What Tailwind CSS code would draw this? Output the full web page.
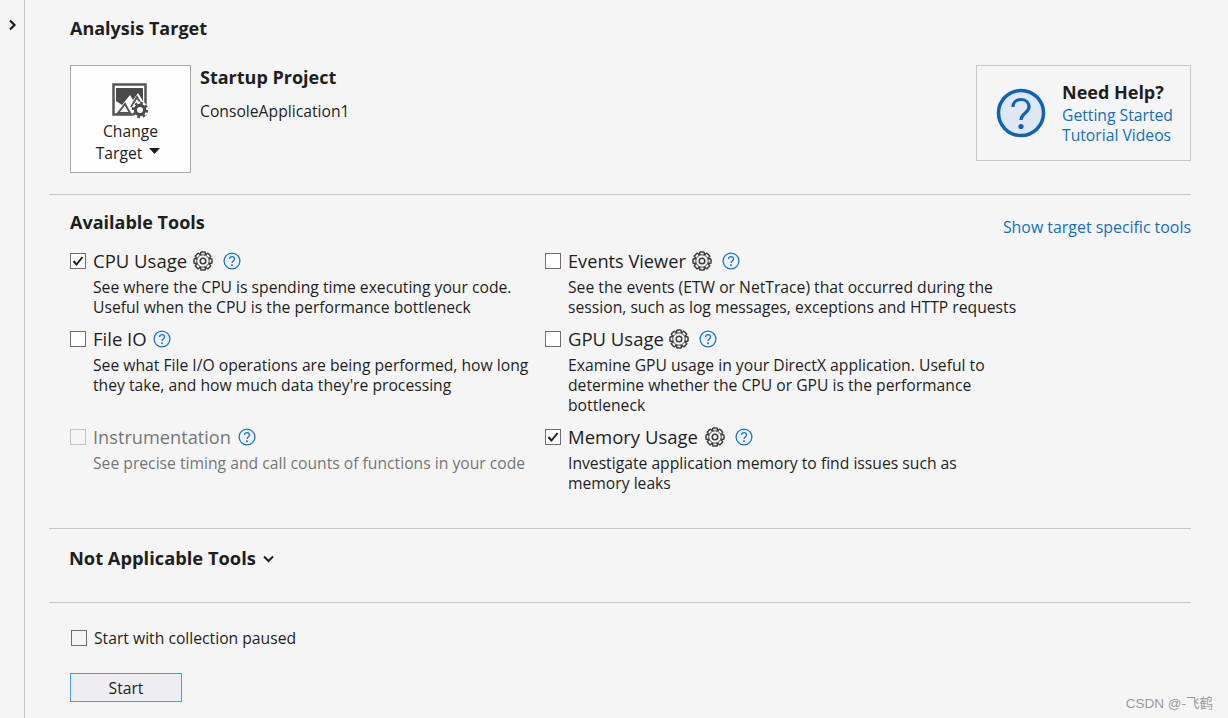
<!DOCTYPE html>
<html lang="en">
<head>
    <meta charset="UTF-8">
    <title>Analysis Target</title>
    <script src="https://cdn.jsdelivr.net/npm/@tailwindcss/browser@4"></script>
</head>
<body class="bg-[#f5f5f5] text-[#1e1e1e] font-['Open_Sans','Noto_Sans',sans-serif] text-[15.7px] leading-[20px] h-[718px] overflow-hidden">
<!-- shared icons -->
<svg width="0" height="0" class="absolute">
    <symbol id="cog" viewBox="0 0 20 20">
        <g fill="none" stroke="#3c3c3c" stroke-width="1.5">
            <rect x="7.7" y="1" width="4.6" height="18" rx="0.8"/>
            <rect x="7.7" y="1" width="4.6" height="18" rx="0.8" transform="rotate(45 10 10)"/>
            <rect x="7.7" y="1" width="4.6" height="18" rx="0.8" transform="rotate(90 10 10)"/>
            <rect x="7.7" y="1" width="4.6" height="18" rx="0.8" transform="rotate(135 10 10)"/>
        </g>
        <circle cx="10" cy="10" r="6.2" fill="#f5f5f5" stroke="#3c3c3c" stroke-width="0.9"/>
        <circle cx="10" cy="10" r="2.8" fill="none" stroke="#3c3c3c" stroke-width="1.5"/>
    </symbol>
    <symbol id="help" viewBox="0 0 18 18">
        <circle cx="9" cy="9" r="7.9" fill="#eef3fa" stroke="#1a73c7" stroke-width="1.3"/>
        <path d="M6.5 7 C6.5 3.8 11.5 3.8 11.5 7 C11.5 9 9 9 9 11" fill="none" stroke="#1a73c7" stroke-width="1.3"/>
        <circle cx="9" cy="13.3" r="1" fill="#1a73c7"/>
    </symbol>
    <symbol id="tick" viewBox="0 0 12 12">
        <path d="M1.5 6 L4.5 9.5 L10.5 2" fill="none" stroke="#1e1e1e" stroke-width="2"/>
    </symbol>
</svg>

<div class="flex h-[718px] relative">
    <!-- collapsed side rail -->
    <div class="w-[25px] shrink-0 border-r border-[#c4c4c4] pt-[19px] pl-[8px]">
        <svg width="9" height="12" viewBox="0 0 9 12"><path d="M2 1.5 L6.5 6 L2 10.5" fill="none" stroke="#1e1e1e" stroke-width="2.2"/></svg>
    </div>

    <div class="w-[1142px] ml-[24px]">
        <!-- analysis target -->
        <section class="h-[195px] border-b border-[#c8c8c8] pl-[21px] pt-[14px] flex flex-col">
            <h2 class="text-[18px] leading-[28px] font-bold">Analysis Target</h2>
            <div class="flex mt-[23px]">
                <div class="w-[121px] h-[108px] bg-[#fdfdfd] border border-[#a8a8a8] flex flex-col items-center pt-[17px]">
                    <svg width="38" height="36" viewBox="0 0 38 36">
                        <rect x="1.5" y="1.5" width="32" height="30" fill="#fff" stroke="#555" stroke-width="2.5"/>
                        <path d="M4 5 H31 V18 L26 10 L21 17 L18 12 L10 22 L4 18 Z" fill="#4a4a4a"/>
                        <path d="M6 30 L13 21 L18 30 Z M19 24 L25 14 L29 21" fill="none" stroke="#555" stroke-width="2"/>
                        <circle cx="28" cy="27" r="8.5" fill="#fdfdfd"/>
                        <circle cx="28" cy="27" r="4.6" fill="none" stroke="#4a4a4a" stroke-width="3.2"/>
                        <circle cx="28" cy="27" r="7" fill="none" stroke="#4a4a4a" stroke-width="2.4" stroke-dasharray="2.6 2.9"/>
                    </svg>
                    <span class="leading-[22px] mt-[1px]">Change</span>
                    <span class="leading-[22px] flex items-center">Target
                        <svg class="ml-[7px] mr-[5px] mb-[5px]" width="11" height="6" viewBox="0 0 11 6"><path d="M0 0 H11 L5.5 6 Z" fill="#1e1e1e"/></svg>
                    </span>
                </div>
                <div class="ml-[9px]">
                    <h3 class="text-[18px] leading-[26px] font-bold -mt-[1px]">Startup Project</h3>
                    <p class="mt-[11px]">ConsoleApplication1</p>
                </div>
                <div class="ml-auto w-[215px] h-[96px] border border-[#c8c8c8] flex items-center pl-[19px]">
                    <svg width="50" height="50" viewBox="0 0 50 50">
                        <circle cx="25" cy="25" r="22.5" fill="#dfe7f2" stroke="#0f62b5" stroke-width="3.5"/>
                        <path d="M17 19 C17 9 33 9 33 19 C33 25 25 25 25 32" fill="none" stroke="#0f62b5" stroke-width="3.2"/>
                        <circle cx="25" cy="38.5" r="2.6" fill="#0f62b5"/>
                    </svg>
                    <div class="ml-[16px] pt-[1px]">
                        <h3 class="text-[18px] leading-[20px] font-bold mb-[3px]">Need Help?</h3>
                        <a class="block text-[#0e70c0]">Getting Started</a>
                        <a class="block text-[#0e70c0]">Tutorial Videos</a>
                    </div>
                </div>
            </div>
        </section>

        <!-- available tools -->
        <section class="h-[334px] border-b border-[#c8c8c8] pl-[21px] pt-[13px]">
            <div class="flex justify-between items-end h-[28px]">
                <h2 class="text-[18px] leading-[28px] font-bold">Available Tools</h2>
                <a class="text-[#0e70c0] text-[15.9px] leading-[20px] -mb-[1px]">Show target specific tools</a>
            </div>
            <div class="grid grid-cols-[475px_475px] grid-rows-[78px_98px_auto] mt-[13px]">
                <div>
                    <div class="flex items-center h-[24px]">
                        <span class="w-[16px] h-[16px] border border-[#6e6e6e] bg-white flex items-center justify-center"><svg width="12" height="12"><use href="#tick"/></svg></span>
                        <span class="ml-[7px] text-[18.5px]">CPU Usage</span>
                        <svg class="ml-[6px]" width="20" height="20"><use href="#cog"/></svg>
                        <svg class="ml-[10px]" width="18" height="18"><use href="#help"/></svg>
                    </div>
                    <p class="ml-[23px] mt-[4px]">See where the CPU is spending time executing your code.<br>Useful when the CPU is the performance bottleneck</p>
                </div>
                <div>
                    <div class="flex items-center h-[24px]">
                        <span class="w-[16px] h-[16px] border border-[#6e6e6e] bg-white"></span>
                        <span class="ml-[7px] text-[18.2px]">Events Viewer</span>
                        <svg class="ml-[6px]" width="20" height="20"><use href="#cog"/></svg>
                        <svg class="ml-[10px]" width="18" height="18"><use href="#help"/></svg>
                    </div>
                    <p class="ml-[23px] mt-[4px]">See the events (ETW or NetTrace) that occurred during the<br>session, such as log messages, exceptions and HTTP requests</p>
                </div>
                <div>
                    <div class="flex items-center h-[24px]">
                        <span class="w-[16px] h-[16px] border border-[#6e6e6e] bg-white"></span>
                        <span class="ml-[7px] text-[18.5px]">File IO</span>
                        <svg class="ml-[6px]" width="18" height="18"><use href="#help"/></svg>
                    </div>
                    <p class="ml-[23px] mt-[4px]">See what File I/O operations are being performed, how long<br>they take, and how much data they're processing</p>
                </div>
                <div>
                    <div class="flex items-center h-[24px]">
                        <span class="w-[16px] h-[16px] border border-[#6e6e6e] bg-white"></span>
                        <span class="ml-[7px] text-[18.5px]">GPU Usage</span>
                        <svg class="ml-[5px]" width="20" height="20"><use href="#cog"/></svg>
                        <svg class="ml-[10px]" width="18" height="18"><use href="#help"/></svg>
                    </div>
                    <p class="ml-[23px] mt-[4px]">Examine GPU usage in your DirectX application. Useful to<br>determine whether the CPU or GPU is the performance<br>bottleneck</p>
                </div>
                <div>
                    <div class="flex items-center h-[24px]">
                        <span class="w-[16px] h-[16px] border border-[#c4c4c4] bg-[#f5f5f5]"></span>
                        <span class="ml-[7px] text-[18.2px] text-[#767676]">Instrumentation</span>
                        <svg class="ml-[7px]" width="18" height="18"><use href="#help"/></svg>
                    </div>
                    <p class="ml-[23px] mt-[4px] text-[#767676]">See precise timing and call counts of functions in your code</p>
                </div>
                <div>
                    <div class="flex items-center h-[24px]">
                        <span class="w-[16px] h-[16px] border border-[#6e6e6e] bg-white flex items-center justify-center"><svg width="12" height="12"><use href="#tick"/></svg></span>
                        <span class="ml-[7px] text-[18.5px]">Memory Usage</span>
                        <svg class="ml-[7px]" width="20" height="20"><use href="#cog"/></svg>
                        <svg class="ml-[10px]" width="18" height="18"><use href="#help"/></svg>
                    </div>
                    <p class="ml-[23px] mt-[4px]">Investigate application memory to find issues such as<br>memory leaks</p>
                </div>
            </div>
        </section>

        <!-- not applicable -->
        <section class="h-[74px] border-b border-[#c8c8c8] pl-[20px] pt-[15px] flex items-start">
            <h2 class="text-[18.3px] leading-[28px] font-bold">Not Applicable Tools</h2>
            <svg class="ml-[7px] mt-[11px]" width="11" height="8" viewBox="0 0 11 8"><path d="M1 1.5 L5.5 6 L10 1.5" fill="none" stroke="#1e1e1e" stroke-width="2"/></svg>
        </section>

        <!-- start -->
        <section class="pl-[21px] pt-[24px]">
            <label class="flex items-center h-[22px] ml-[1px]">
                <span class="w-[16px] h-[16px] border border-[#6e6e6e] bg-[#f5f5f5]"></span>
                <span class="ml-[7px]">Start with collection paused</span>
            </label>
            <button class="mt-[24px] w-[112px] h-[29px] bg-[#eeeef2] border border-[#4a98e8] leading-[29px]">Start</button>
        </section>
    </div>

    <span class="absolute right-[15px] top-[694px] text-[13.5px] text-[#9a9a9a] font-['Liberation_Sans','Noto_Sans_CJK_SC',sans-serif]">CSDN @-飞鹤</span>
</div>
</body>
</html>
